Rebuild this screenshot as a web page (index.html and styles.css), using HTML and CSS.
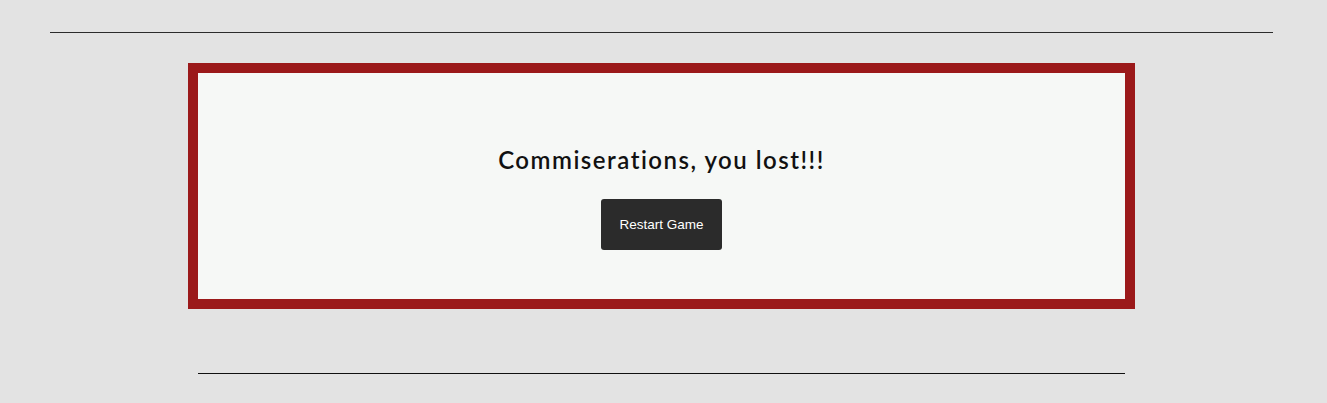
FILE: index.html
```html
<!DOCTYPE html>
<html lang="en">
<head>
<meta charset="utf-8">
<title>Game Over</title>
<link rel="stylesheet" href="styles.css">
</head>
<body>
<hr class="rule rule-top">
<section class="panel">
  <h2 class="title">Commiserations, you lost!!!</h2>
  <button class="btn" type="button">Restart Game</button>
</section>
<hr class="rule rule-bottom">
</body>
</html>
```
FILE: styles.css
```css
html, body {
  margin: 0;
  padding: 0;
}
body {
  background: #e3e3e3;
  width: 1327px;
  height: 403px;
  overflow: hidden;
  font-family: "Liberation Sans", Arial, sans-serif;
}
.rule {
  border: 0;
  height: 1px;
  padding: 0;
}
.rule-top {
  background: #2b2b2b;
  margin: 32px 0 0 50px;
  width: 1223px;
}
.panel {
  box-sizing: border-box;
  width: 947px;
  height: 246px;
  margin: 30px 0 0 188px;
  border: 10px solid #9b191a;
  background: #f6f8f6;
  padding-top: 71px;
  display: flex;
  flex-direction: column;
  align-items: center;
}
.title {
  margin: 0;
  font-family: Lato, sans-serif;
  font-weight: 600;
  font-size: 24px;
  line-height: 32px;
  letter-spacing: 1.5px;
  color: #111;
}
.btn {
  box-sizing: border-box;
  margin-top: 23px;
  border: 0;
  border-radius: 3px;
  background: #2b2b2b;
  color: #fff;
  font-family: "Liberation Sans", Arial, sans-serif;
  font-size: 13.5px;
  line-height: 17px;
  padding: 17px 10px;
  width: 121px;
  height: 51px;
  white-space: nowrap;
}
.rule-bottom {
  background: #111;
  margin: 64px 0 0 198px;
  width: 927px;
}
```
